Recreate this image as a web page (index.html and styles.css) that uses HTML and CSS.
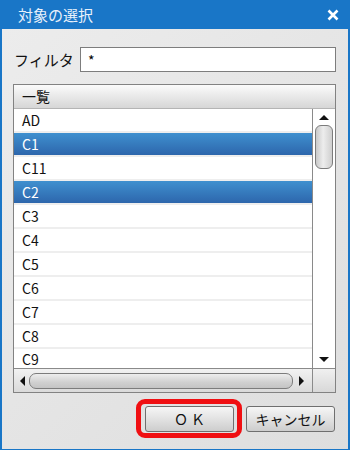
FILE: index.html
```html
<!DOCTYPE html>
<html lang="ja">
<head>
    <meta charset="UTF-8">
    <meta name="viewport" content="width=device-width, initial-scale=1.0">
    <title>対象の選択</title>
    <link rel="stylesheet" href="styles.css">
</head>
<body>
    <div class="window">
        <div class="titlebar">
            <span class="title">対象の選択</span>
            <svg class="close" width="12" height="12" viewBox="0 0 12 12">
                <path d="M1.5 1.5 L10.5 10.5 M10.5 1.5 L1.5 10.5" stroke="#fff" stroke-width="2.6" fill="none"/>
            </svg>
        </div>
        <div class="content">
            <div class="filter-row">
                <label class="filter-label" for="filter">フィルタ</label>
                <input class="filter-input" id="filter" type="text" value="*">
            </div>

            <div class="list">
                <div class="list-header">一覧</div>
                <div class="list-body">
                    <div class="rows">
                        <div class="row">AD</div>
                        <div class="row selected">C1</div>
                        <div class="row">C11</div>
                        <div class="row selected">C2</div>
                        <div class="row">C3</div>
                        <div class="row">C4</div>
                        <div class="row">C5</div>
                        <div class="row">C6</div>
                        <div class="row">C7</div>
                        <div class="row">C8</div>
                        <div class="row last">C9</div>
                    </div>
                    <div class="vscroll">
                        <div class="arrow arrow-up"></div>
                        <div class="vtrack">
                            <div class="vthumb"></div>
                        </div>
                        <div class="arrow arrow-down"></div>
                    </div>
                </div>
                <div class="list-foot">
                    <div class="hscroll">
                        <div class="arrow arrow-left"></div>
                        <div class="hthumb"></div>
                        <div class="arrow arrow-right"></div>
                    </div>
                    <div class="corner"></div>
                </div>
            </div>

            <div class="buttons">
                <div class="highlight">
                    <button class="btn btn-ok">Ｏ Ｋ</button>
                </div>
                <button class="btn btn-cancel">キャンセル</button>
            </div>
        </div>
    </div>
</body>
</html>
```

FILE: styles.css
```css
body {
    margin: 0;
    font-family: "Noto Sans CJK JP", "Noto Sans", sans-serif;
    font-size: 14px;
    color: #111;
}
.window {
    width: 350px;
    height: 450px;
    background-color: #1976c7;
    display: flex;
    flex-direction: column;
    box-sizing: border-box;
    padding: 0 2px 1px 2px;
}
.titlebar {
    height: 29px;
    display: flex;
    align-items: center;
    justify-content: space-between;
    padding: 0 9px 0 16px;
    flex-shrink: 0;
}
.title {
    color: #e9f1fb;
    font-size: 15px;
    line-height: 18px;
}
.close {
    display: block;
}
.content {
    flex: 1;
    background: linear-gradient(135deg, #ececec, #dedede);
    padding: 18px 12px 0 11px;
    display: flex;
    flex-direction: column;
}
.filter-row {
    display: flex;
    align-items: center;
    height: 25px;
}
.filter-label {
    width: 66px;
    font-size: 15px;
    line-height: 18px;
    padding-left: 1px;
}
.filter-input {
    flex: 1;
    height: 25px;
    box-sizing: border-box;
    border: 1px solid #7d7d7d;
    background: #fff;
    padding: 0 7px;
    font-family: inherit;
    font-size: 14px;
    margin: 0;
    outline: none;
}
.list {
    margin-top: 12px;
    border: 1px solid #828282;
    background: #fff;
    display: flex;
    flex-direction: column;
}
.list-header {
    height: 23px;
    line-height: 23px;
    padding-left: 8px;
    background: linear-gradient(#fbfbfb, #d6d6d6);
    border-bottom: 1px solid #b4b4b4;
}
.list-body {
    display: flex;
    height: 259px;
}
.rows {
    flex: 1;
    overflow: hidden;
}
.row {
    height: 22px;
    line-height: 22px;
    padding-left: 8px;
    border-bottom: 2px solid #eeeeee;
}
.row.last {
    height: 19px;
    line-height: 20px;
    border-bottom: none;
}
.row.selected {
    background: linear-gradient(#3f90cf, #2d66ac);
    color: #fff;
}
.vscroll {
    width: 22px;
    border-left: 1px solid #8a8a8a;
    background: #fff;
    display: flex;
    flex-direction: column;
    align-items: center;
}
.vtrack {
    flex: 1;
    width: 100%;
    display: flex;
    justify-content: center;
}
.vthumb {
    width: 16px;
    height: 42px;
    border: 1px solid #7c7c7c;
    border-radius: 6px;
    background: linear-gradient(90deg, #c9c9c9, #ededed 45%, #cfcfcf);
}
.arrow {
    width: 0;
    height: 0;
    flex-shrink: 0;
}
.arrow-up {
    margin: 6px 0 5px;
    border-left: 5px solid transparent;
    border-right: 5px solid transparent;
    border-bottom: 5px solid #111;
}
.arrow-down {
    margin: 5px 0 6px;
    border-left: 5px solid transparent;
    border-right: 5px solid transparent;
    border-top: 5px solid #111;
}
.list-foot {
    display: flex;
    height: 23px;
    border-top: 1px solid #8a8a8a;
}
.hscroll {
    flex: 1;
    display: flex;
    align-items: center;
    padding: 0 8px 0 6px;
    background: linear-gradient(#f2f2f2, #dadada);
}
.hthumb {
    flex: 1;
    height: 14px;
    margin: 0 6px 0 4px;
    border: 1px solid #7c7c7c;
    border-radius: 7px;
    background: linear-gradient(#ededed, #d0d0d0 60%, #c4c4c4);
}
.arrow-left {
    border-top: 5px solid transparent;
    border-bottom: 5px solid transparent;
    border-right: 5px solid #111;
}
.arrow-right {
    border-top: 5px solid transparent;
    border-bottom: 5px solid transparent;
    border-left: 5px solid #111;
}
.corner {
    width: 22px;
    border-left: 1px solid #8a8a8a;
    background: linear-gradient(#f0f0f0, #d8d8d8);
}
.buttons {
    display: flex;
    justify-content: flex-end;
    align-items: center;
    gap: 4px;
    margin-top: 6px;
    padding-right: 1px;
}
.highlight {
    border: 5px solid #f00f12;
    border-radius: 9px;
    padding: 2px 3px 1px 4px;
}
.btn {
    height: 26px;
    box-sizing: border-box;
    border: 1px solid #6f6f6f;
    border-radius: 3px;
    background: linear-gradient(#f6f6f6, #e2e2e2 50%, #cdcdcd);
    font-family: inherit;
    font-size: 14px;
    color: #111;
    padding: 0;
    margin: 0;
}
.btn-ok {
    width: 89px;
}
.btn-cancel {
    width: 89px;
}
```
